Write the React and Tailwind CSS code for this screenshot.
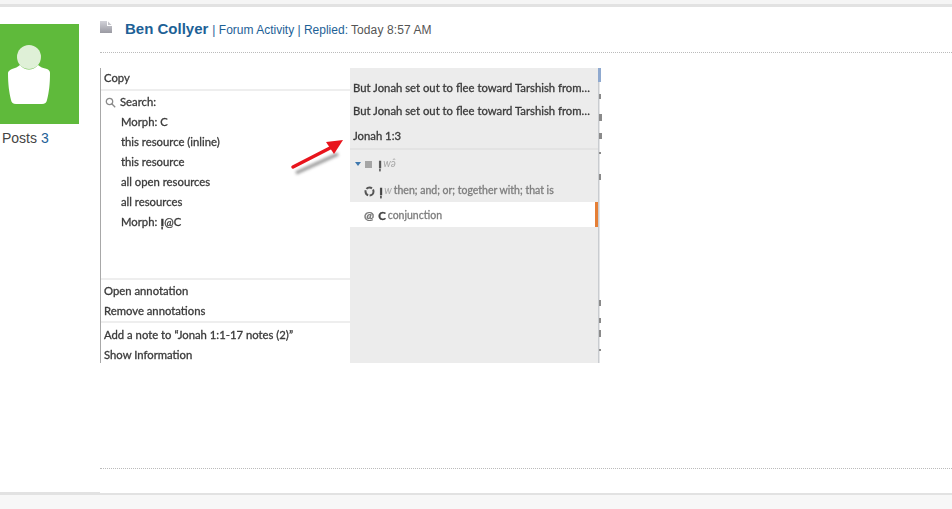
// App.jsx
const lato = "font-['Lato','Noto_Sans',sans-serif]";

function MenuRow({ children, className = '' }) {
  return <div className={`h-5 leading-5 ${className}`}>{children}</div>;
}

function Avatar() {
  return (
    <div className="h-[100px] w-[79px] bg-[#5fba3b]">
      <svg width="79" height="100" viewBox="0 0 79 100">
        <circle cx="29" cy="33" r="12" fill="#dff0d7" />
        <path
          d="M12 45 C15 44 18 43 20 41 C25 47 33 47 38 41 C40 43 43 44 47 45 C49 46 50 47 50 49 C50 60 49 68 47 76 C46.5 78.5 45 80 42 80 L16 80 C13 80 11.5 78.5 11 76 C9 68 8 60 8 49 C8 47 10 46 12 45 Z"
          fill="#ffffff"
        />
      </svg>
    </div>
  );
}

function ScreenshotLeft() {
  return (
    <div className="flex w-[250px] flex-col overflow-hidden border-l border-[#a8a8a8] bg-white text-[11.3px] text-[#3a3a3a] [-webkit-text-stroke:0.3px]">
      <div className="h-[21px] shrink-0 pl-[3px] leading-[19px]">Copy</div>
      <div className="h-[189px] shrink-0 border-t-2 border-[#eeeeee] pt-[1px]">
        <div className="flex h-5 items-center">
          <svg className="ml-[4px] mr-[4px]" width="11" height="11" viewBox="0 0 11 11" fill="none" stroke="#8a8a8a" strokeWidth="1.3">
            <circle cx="4.5" cy="4.5" r="3.2" />
            <path d="M7 7l3.2 3.2" />
          </svg>
          Search:
        </div>
        <div className="pl-[20px]">
          <MenuRow>Morph: C</MenuRow>
          <MenuRow>this resource (inline)</MenuRow>
          <MenuRow>this resource</MenuRow>
          <MenuRow>all open resources</MenuRow>
          <MenuRow>all resources</MenuRow>
          <MenuRow>
            Morph: <span className="font-['DejaVu_Sans',sans-serif] text-[12px] font-bold">וְ</span>@C
          </MenuRow>
        </div>
      </div>
      <div className="h-[43px] shrink-0 border-t-2 border-[#eeeeee] pl-[3px] pt-[1px]">
        <MenuRow>Open annotation</MenuRow>
        <MenuRow>Remove annotations</MenuRow>
      </div>
      <div className="shrink-0 border-t-2 border-[#eeeeee] pl-[3px] pt-[2px]">
        <MenuRow>Add a note to “Jonah 1:1-17 notes (2)”</MenuRow>
        <MenuRow>Show Information</MenuRow>
      </div>
    </div>
  );
}

function ScreenshotRight() {
  return (
    <div className="flex w-[248px] flex-col bg-[#ececec] text-[11.3px] text-[#3a3a3a] [-webkit-text-stroke:0.3px]">
      <div className="h-[82px] border-b-2 border-[#e3e3e3] pl-[3px] pt-[8px]">
        <div className="h-[23px] leading-[23px]">But Jonah set out to flee toward Tarshish from…</div>
        <div className="h-[25px] leading-[23px]">But Jonah set out to flee toward Tarshish from…</div>
        <div className="leading-[23px]">Jonah 1:3</div>
      </div>
      <div className="flex h-[26px] items-center pl-[5px] pt-[2px] text-[#a8a8a8]">
        <span className="mr-[4px] h-0 w-0 border-x-[3px] border-t-[4px] border-x-transparent border-t-[#3f78ae]" />
        <span className="mr-[6px] h-[7px] w-[7px] bg-[#a5a5a5]" />
        <span className="font-['DejaVu_Sans',sans-serif] text-[12px] font-bold text-[#555555]">וְ</span>
        <span className="ml-[1px] text-[10.5px] italic [-webkit-text-stroke:0px]">wǝ̂</span>
      </div>
      <div className="flex h-[26px] items-center pl-[14px] pt-[4px] text-[10.5px] text-[#7d7d7d]">
        <svg className="mr-[4px]" width="11" height="11" viewBox="0 0 11 11" fill="none" stroke="#555555" strokeWidth="2" strokeDasharray="6 1.5">
          <circle cx="5.5" cy="5.5" r="4" />
        </svg>
        <span className="font-['DejaVu_Sans',sans-serif] text-[12px] font-bold text-[#444444]">וְ</span>
        <span className="ml-[1px] italic text-[#a8a8a8] [-webkit-text-stroke:0px]">w</span>
        <span className="ml-[2px]">then; and; or; together with; that is</span>
      </div>
      <div className="flex h-[25px] items-center bg-white pl-[14px] text-[10.5px] text-[#7d7d7d]">
        <span className="mr-[4px] mt-[2px] text-[12px] font-bold text-[#777777]">@</span>
        <span className="mr-[2px] mt-[2px] text-[11.5px] font-bold text-[#444444]">C</span>
        <span className="mt-[2px]">conjunction</span>
        <span className="ml-auto h-full w-[3px] bg-[#e57f36]" />
      </div>
      <div className="flex-1" />
    </div>
  );
}

function ScreenshotEdge() {
  return (
    <svg width="5" height="295" viewBox="0 0 5 295" className="shrink-0 blur-[0.6px]">
      <rect x="0" y="0" width="1.5" height="295" fill="#c9ccd0" />
      <rect x="0" y="0" width="3" height="14" fill="#8fa9cf" />
      <g fill="#8a8a8a">
        <rect x="1" y="26" width="2" height="5" />
        <rect x="1" y="46" width="3" height="7" />
        <rect x="1" y="65" width="3" height="6" />
        <rect x="1" y="84" width="2" height="2" />
        <rect x="1" y="106" width="2" height="6" />
        <rect x="1" y="232" width="2" height="6" />
        <rect x="1" y="250" width="2" height="5" />
        <rect x="1" y="262" width="2" height="7" />
        <rect x="1" y="281" width="2" height="2" />
      </g>
    </svg>
  );
}

function Arrow() {
  return (
    <svg className="absolute left-[188px] top-[62px]" width="64" height="48" viewBox="0 0 64 48">
      <defs>
        <filter id="arrowShadow" x="-20%" y="-40%" width="140%" height="180%">
          <feGaussianBlur stdDeviation="1.6" />
        </filter>
      </defs>
      <g filter="url(#arrowShadow)" opacity="0.6">
        <path d="M8 43 L50 24" stroke="#555555" strokeWidth="3.5" fill="none" />
      </g>
      <path d="M5 37 L44 17" stroke="#e8141c" strokeWidth="3.5" strokeLinecap="round" fill="none" />
      <path d="M55 10 L38 12 L46 24 Z" fill="#e8141c" />
    </svg>
  );
}

export default function App() {
  return (
    <div className="flex h-[509px] w-[952px] flex-col overflow-hidden bg-[#f7f7f7] font-['Liberation_Sans',Arial,sans-serif]">
      <div className="h-[7px] shrink-0 border-b-[3px] border-[#e2e2e2] bg-[#f5f5f5]" />

      <div className="flex h-[488px] shrink-0">
        {/* kolom user */}
        <div className="h-full w-[100px] shrink-0 border-b-[3px] border-[#e2e2e2] bg-white pt-[17px]">
          <Avatar />
          <div className="mt-[5px] pl-[2px] text-[14px] leading-[18px] text-[#444444]">
            Posts <span className="text-[#1d6196]">3</span>
          </div>
        </div>

        {/* kolom post */}
        <div className="flex h-full flex-1 flex-col border-b-2 border-[#e2e2e2] bg-white">
          <div className="flex h-[46px] items-center border-b border-dotted border-[#bbbbbb] pb-[1px]">
            <svg className="-mt-[5px] shrink-0" width="12" height="14" viewBox="0 0 12 14">
              <defs>
                <linearGradient id="pageFill" x1="0" y1="0" x2="0" y2="1">
                  <stop offset="0" stopColor="#d2d2d8" />
                  <stop offset="1" stopColor="#9a9aa2" />
                </linearGradient>
              </defs>
              <path d="M0 1 H7 V6 H12 V13 H0 Z" fill="url(#pageFill)" />
              <path d="M8 1.5 L11.5 5 H8 Z" fill="#c4c4ca" />
            </svg>
            <span className="ml-[13px] text-[15px] font-bold text-[#1d6196]">Ben Collyer</span>
            <span className="ml-[4px] mt-[1px] text-[12px] text-[#1d6196]">
              | Forum Activity | Replied:
            </span>
            <span className="ml-[3px] mt-[1px] text-[12px] tracking-[0.1px] text-[#555555]">Today 8:57 AM</span>
          </div>

          <div className="pt-[15px]">
            <div className={`relative flex h-[295px] w-[503px] blur-[0.4px] ${lato}`}>
              <ScreenshotLeft />
              <ScreenshotRight />
              <ScreenshotEdge />
              <Arrow />
            </div>
          </div>

          <div className="mt-[105px] border-b border-dotted border-[#bbbbbb]" />
        </div>
      </div>
    </div>
  );
}
